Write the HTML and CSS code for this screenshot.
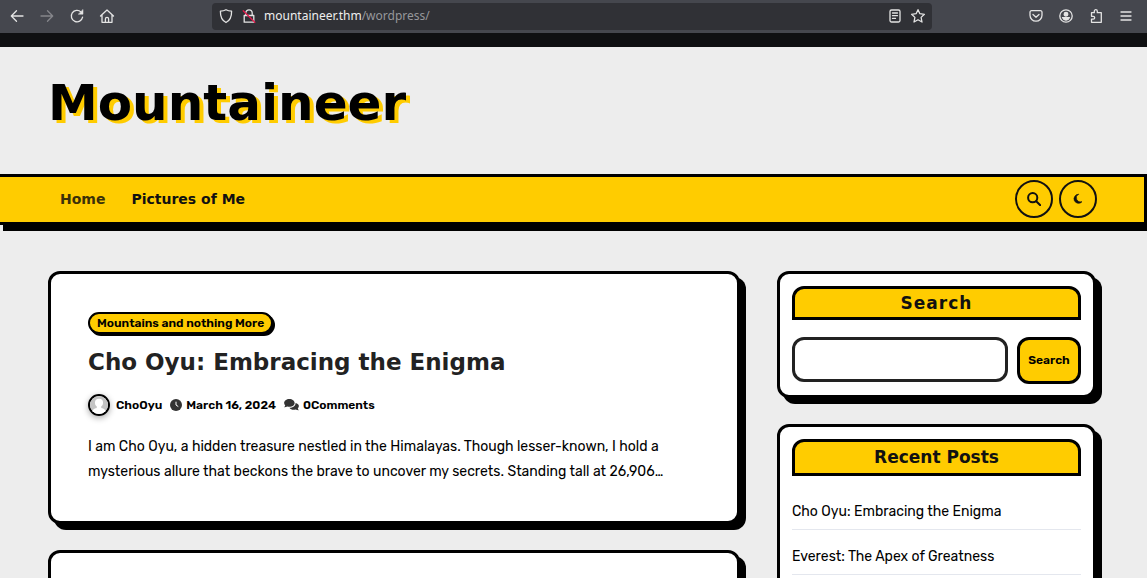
FILE: index.html
```html
<!DOCTYPE html>
<html lang="en">
<head>
<meta charset="utf-8">
<title>Mountaineer</title>
<link rel="stylesheet" href="styles.css">
</head>
<body>
<div class="toolbar">
  <div class="nav-buttons">
    <button type="button" aria-label="Back"><svg viewBox="0 0 16 16"><path d="M14 8H2.5M7.5 2.8 2.3 8l5.2 5.2"/></svg></button>
    <button type="button" aria-label="Forward" class="dim"><svg viewBox="0 0 16 16"><path d="M2 8h11.5M8.500 2.800 13.700 8l-5.200 5.200"/></svg></button>
    <button type="button" aria-label="Reload"><svg viewBox="0 0 16 16"><path d="M13.600 9.200A5.700 5.700 0 1 1 12 4l1.200 1.200"/><path d="M14 1.800v4.400H9.600z" fill="currentColor" stroke-width="0.500"/></svg></button>
    <button type="button" aria-label="Home"><svg viewBox="0 0 16 16"><path d="M1.500 8 8 2l6.500 6M3 7v7.300h10V7M6.400 14v-3a1.600 1.600 0 0 1 3.200 0v3"/></svg></button>
  </div>
  <div class="address">
    <svg viewBox="0 0 16 16"><path d="M8 1.700c1.700 1 3.500 1.400 5.600 1.500C13.700 8.500 12 12.500 8 14.500 4 12.500 2.300 8.500 2.400 3.200 4.500 3.100 6.300 2.700 8 1.700z"/></svg>
    <svg viewBox="0 0 16 16"><path d="M3.200 7.500h9.600v6.700H3.200zM4.800 7.500V5a3.200 3.200 0 0 1 6.400 0v2.500"/><path class="strike" d="M2.200 2.800 13.800 14.200"/></svg>
    <span class="url">mountaineer.thm<span class="path">/wordpress/</span></span>
    <button type="button" aria-label="Reader view"><svg viewBox="0 0 16 16"><rect x="3" y="2" width="10" height="12" rx="1.500"/><path d="M5.500 5h5M5.500 7.700h5M5.500 10.400h3"/></svg></button>
    <button type="button" aria-label="Bookmark"><svg viewBox="0 0 16 16"><path d="m8 1.700 1.900 4 4.500.6-3.300 3.100.9 4.600-4-2.300L4 14l.9-4.600L1.600 6.300l4.500-.6z"/></svg></button>
  </div>
  <div class="tools">
    <button type="button" aria-label="Pocket"><svg viewBox="0 0 16 16"><path d="M3.500 2.700h9a1.500 1.500 0 0 1 1.500 1.500v3a6 6 0 0 1-12 0v-3a1.500 1.500 0 0 1 1.500-1.500zM5 6.500l3 2.700 3-2.700"/></svg></button>
    <button type="button" aria-label="Account"><svg viewBox="0 0 16 16"><circle cx="8" cy="8" r="6.200"/><circle cx="8" cy="6.200" r="1.800" fill="currentColor"/><path d="M4.500 9.600h7c-.8 1.800-2 2.600-3.500 2.600s-2.700-.8-3.500-2.600z" fill="currentColor"/></svg></button>
    <button type="button" aria-label="Extensions"><svg viewBox="0 0 16 16"><path d="M6.300 4.700V3.200a1.500 1.500 0 0 1 3 0v1.500h4v9.600H3.500v-3.200h1.800a1.400 1.400 0 0 0 0-2.800H3.500V4.700z"/></svg></button>
    <button type="button" aria-label="Menu"><svg viewBox="0 0 16 16"><path d="M3 4h10M3 8h10M3 12h10"/></svg></button>
  </div>
</div>

<div class="site">
  <header class="site-header"><h1>Mountaineer</h1></header>
  <nav class="site-nav">
    <a href="#" class="current">Home</a>
    <a href="#">Pictures of Me</a>
    <div class="nav-actions">
      <button type="button" aria-label="Search"><svg viewBox="0 0 14 14"><circle cx="5.700" cy="5.700" r="4.600"/><path d="m9.200 9.200 4.100 4.100"/></svg></button>
      <button type="button" aria-label="Dark mode" class="moon"><svg viewBox="0 0 14 14"><path d="M7.400 1.400A5.300 5.300 0 1 0 11.600 10.200 4.900 4.900 0 0 1 7.400 1.400z" stroke="#111" stroke-width="0.800"/></svg></button>
    </div>
  </nav>

  <div class="content">
    <main class="posts">
      <article class="card post">
        <a href="#" class="category">Mountains and nothing More</a>
        <h2>Cho Oyu: Embracing the Enigma</h2>
        <div class="meta">
          <a href="#" class="author"><span class="avatar"><svg viewBox="0 0 16 16"><rect width="16" height="16" fill="#c4c4c4"/><circle cx="8" cy="6" r="3.600" fill="#fff"/><path d="M1.500 16c.2-3.800 2.200-5 4.500-5.400V8h4v2.600c2.300.4 4.300 1.600 4.500 5.400z" fill="#fff"/></svg></span>ChoOyu</a>
          <a href="#"><svg class="clock" viewBox="0 0 12 12"><circle cx="6" cy="6" r="6"/><path d="M6 2.700V6l2.300 1.600"/></svg>March 16, 2024</a>
          <a href="#"><svg class="comments" viewBox="0 0 16 13"><path d="M5.700 0C2.500 0 0 1.900 0 4.300c0 1 .5 2 1.200 2.700C1 7.900.4 8.500 0 9c1.300.1 2.500-.3 3.400-.9.700.300 1.500.4 2.300.4 3.200 0 5.700-1.900 5.700-4.200S8.900 0 5.700 0z"/><path d="M12.400 4.300c.1 3-2.800 5.200-6.600 5.200.9 1.500 2.600 2.200 4.500 2.200.8 0 1.600-.1 2.300-.4.900.6 2.100 1 3.400.9-.4-.5-1-1.100-1.200-2 .7-.7 1.200-1.700 1.200-2.700 0-1.500-1.400-2.700-3.600-3.200z"/></svg>0Comments</a>
        </div>
        <p>I am Cho Oyu, a hidden treasure nestled in the Himalayas. Though lesser-known, I hold a mysterious allure that beckons the brave to uncover my secrets. Standing tall at 26,906…</p>
      </article>
      <article class="card post"></article>
    </main>
    <aside class="sidebar">
      <form class="card widget">
        <label for="search" class="widget-title spaced">Search</label>
        <div class="search-row"><input id="search" type="search"><button type="submit">Search</button></div>
      </form>
      <section class="card widget">
        <h2 class="widget-title tall">Recent Posts</h2>
        <ul>
          <li><a href="#">Cho Oyu: Embracing the Enigma</a></li>
          <li><a href="#">Everest: The Apex of Greatness</a></li>
        </ul>
      </section>
    </aside>
  </div>
</div>
</body>
</html>
```
FILE: styles.css
```css
* { box-sizing: border-box; }

body {
  margin: 0;
  height: 100vh;
  overflow: hidden;
  display: flex;
  flex-direction: column;
  background: #ededed;
  color: #000;
  font: 14px/25px Rubik, Roboto, sans-serif;
}

a { color: inherit; text-decoration: none; }
button { padding: 0; border: 0; background: none; color: inherit; font: inherit; }
h1, h2, p, ul { margin: 0; padding: 0; }
svg { display: block; flex: none; }

/* Browser toolbar */
.toolbar {
  flex: none;
  display: flex;
  align-items: center;
  height: 47px;
  padding: 0 13px 1px 9px;
  border-bottom: 14px solid #0f1012;
  background: #45474e;
  color: #e4e4e4;
}
.toolbar svg {
  width: 16px;
  height: 16px;
  fill: none;
  stroke: currentColor;
  stroke-width: 1.3;
  stroke-linecap: round;
  stroke-linejoin: round;
}
.nav-buttons { display: flex; gap: 14px; width: 203px; }
.dim { color: #85868b; }
.address {
  flex: 0 1 720px;
  display: flex;
  align-items: center;
  gap: 7px;
  height: 27px;
  padding: 0 6px;
  border-radius: 4px;
  background: #303136;
}
.address .strike { stroke: #e2184a; }
.url { flex: 1; font: 12px/20px "Noto Sans", sans-serif; color: #eee; }
.path { color: #96979b; }
.tools { display: flex; gap: 14px; margin-left: auto; }

/* Site header */
.site { flex: 1; min-height: 0; overflow: hidden; }
.site-header { padding: 24px 48px 39px; }
h1 {
  font: bold 50px/64px "DejaVu Sans", sans-serif;
  text-shadow: 4px 3px 0 #fc0;
}
.site-nav {
  display: flex;
  align-items: center;
  gap: 26px;
  height: 51px;
  padding: 0 47px 1px 60px;
  border: 3px solid #000;
  border-left: 0;
  background: #fc0;
  box-shadow: 3px 6px 0 #000;
  color: #111;
  font: bold 14px/24px "DejaVu Sans", sans-serif;
}
.current { color: #3b3109; }
.nav-actions { display: flex; gap: 6px; margin-left: auto; }
.nav-actions button {
  display: grid;
  place-items: center;
  width: 38px;
  height: 38px;
  border: 2px solid #111;
  border-radius: 50%;
}
.nav-actions svg { width: 14px; height: 14px; fill: none; stroke: #111; stroke-width: 2; stroke-linecap: round; }
.nav-actions .moon svg { width: 12px; height: 12px; fill: #111; stroke: none; }

/* Content */
.content {
  display: grid;
  grid-template-columns: 692fr 319fr;
  gap: 37px;
  padding: 46px 51px 0 48px;
}
.posts, .sidebar { display: flex; flex-direction: column; gap: 26px; min-width: 0; }
.card {
  border: 3px solid #000;
  border-radius: 12px;
  background: #fff;
  box-shadow: 6px 6px 0 #000;
}
.post {
  display: flex;
  flex-direction: column;
  min-height: 253px;
  padding: 38px 37px 37px;
}
.category {
  align-self: flex-start;
  padding: 0 7px;
  border: 2px solid #000;
  border-radius: 12px;
  background: #fc0;
  box-shadow: 2px 2px 0 #000;
  font-size: 12px;
  font-weight: 600;
  line-height: 18px;
}
.post h2 {
  margin-top: 12px;
  font: bold 23px/32px "DejaVu Sans", sans-serif;
  color: #222;
}
.meta, .meta a { display: flex; align-items: center; }
.meta { gap: 8px; margin: 15px 0 17px; font-size: 12px; font-weight: 600; line-height: 24px; }
.meta a { gap: 4px; }
.meta .author { gap: 6px; }
.avatar {
  width: 22px;
  height: 22px;
  overflow: hidden;
  border: 2px solid #000;
  border-radius: 50%;
  box-shadow: 0 2px 6px #0005;
}
.avatar svg { width: 18px; height: 18px; }
.clock { width: 12px; height: 12px; fill: #333; }
.clock path { fill: none; stroke: #fff; }
.comments { width: 15px; height: 12px; fill: #333; }

/* Sidebar */
.widget { padding: 12px 12px 11px; }
.widget-title {
  display: block;
  border: 3px solid #000;
  border-radius: 12px 12px 0 0;
  background: #fc0;
  color: #111;
  font: bold 17px/28px "DejaVu Sans", sans-serif;
  text-align: center;
}
.spaced { letter-spacing: 1px; }
.tall { line-height: 31px; }
.search-row { display: flex; align-items: flex-start; gap: 9px; margin-top: 17px; }
.search-row input {
  flex: 1;
  min-width: 0;
  height: 45px;
  padding: 0 12px;
  border: 3px solid #222;
  border-radius: 12px;
  background: #fff;
  font: inherit;
}
.search-row button {
  width: 64px;
  height: 47px;
  border: 3px solid #000;
  border-radius: 12px;
  background: #fc0;
  font-size: 12px;
  font-weight: 600;
}
ul { margin-top: 9px; list-style: none; }
li { padding: 14px 0 5px; border-bottom: 1px solid #e4e7ee; }
```
